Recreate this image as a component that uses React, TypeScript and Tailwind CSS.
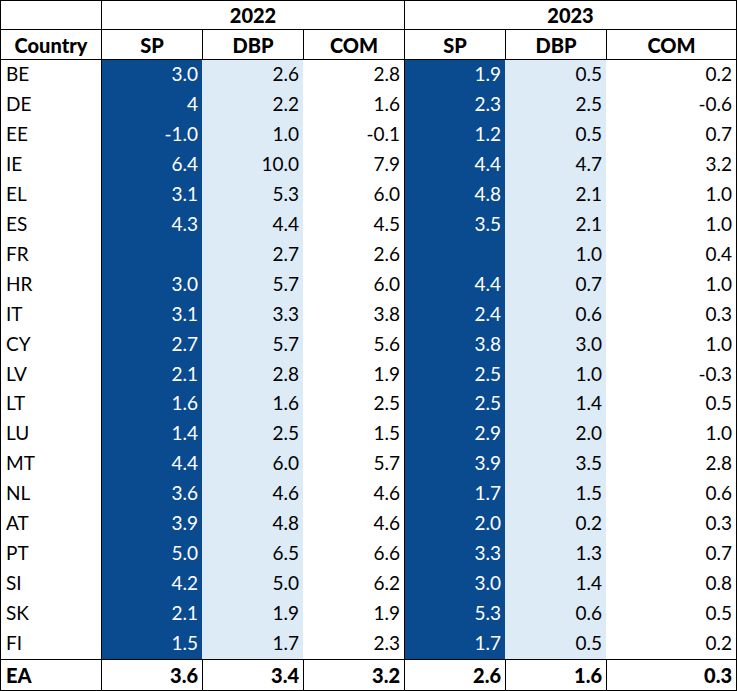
const rows: [string, string, string, string, string, string, string][] = [
	["BE", "3.0", "2.6", "2.8", "1.9", "0.5", "0.2"],
	["DE", "4", "2.2", "1.6", "2.3", "2.5", "-0.6"],
	["EE", "-1.0", "1.0", "-0.1", "1.2", "0.5", "0.7"],
	["IE", "6.4", "10.0", "7.9", "4.4", "4.7", "3.2"],
	["EL", "3.1", "5.3", "6.0", "4.8", "2.1", "1.0"],
	["ES", "4.3", "4.4", "4.5", "3.5", "2.1", "1.0"],
	["FR", "", "2.7", "2.6", "", "1.0", "0.4"],
	["HR", "3.0", "5.7", "6.0", "4.4", "0.7", "1.0"],
	["IT", "3.1", "3.3", "3.8", "2.4", "0.6", "0.3"],
	["CY", "2.7", "5.7", "5.6", "3.8", "3.0", "1.0"],
	["LV", "2.1", "2.8", "1.9", "2.5", "1.0", "-0.3"],
	["LT", "1.6", "1.6", "2.5", "2.5", "1.4", "0.5"],
	["LU", "1.4", "2.5", "1.5", "2.9", "2.0", "1.0"],
	["MT", "4.4", "6.0", "5.7", "3.9", "3.5", "2.8"],
	["NL", "3.6", "4.6", "4.6", "1.7", "1.5", "0.6"],
	["AT", "3.9", "4.8", "4.6", "2.0", "0.2", "0.3"],
	["PT", "5.0", "6.5", "6.6", "3.3", "1.3", "0.7"],
	["SI", "4.2", "5.0", "6.2", "3.0", "1.4", "0.8"],
	["SK", "2.1", "1.9", "1.9", "5.3", "0.6", "0.5"],
	["FI", "1.5", "1.7", "2.3", "1.7", "0.5", "0.2"]
];

const total = ["EA", "3.6", "3.4", "3.2", "2.6", "1.6", "0.3"];

// per data column: cell classes (fill + left edge)
const dataCols = [
	"w-[101px] border-l border-black bg-[#0a4a8f] text-white",
	"w-[101px] border-l border-[#ddebf7] bg-[#ddebf7] text-black",
	"w-[101px] border-l border-white bg-white text-black",
	"w-[101px] border-l border-black bg-[#0a4a8f] text-white",
	"w-[101px] border-l border-[#ddebf7] bg-[#ddebf7] text-black",
	"w-[130px] border-l border-white bg-white text-black"
];

const headCols = ["w-[101px]", "w-[101px]", "w-[101px]", "w-[101px]", "w-[101px]", "w-[130px]"];

export default function App() {
	return (
		<div
			className="bg-white text-black text-[19px] leading-none"
			style={{ fontFamily: "Lato, 'Liberation Sans', sans-serif" }}>
			<div className="w-[737px] border border-black">
				{/* Year row */}
				<div className="flex h-[29px] border-b border-black text-[20px] font-black">
					<div className="w-[100px]" />
					<div className="flex w-[303px] items-center justify-center border-l border-black">2022</div>
					<div className="flex w-[332px] items-center justify-center border-l border-black">2023</div>
				</div>

				{/* Column names */}
				<div className="flex h-[30px] border-b border-black text-[20px] font-black">
					<div className="flex w-[100px] items-center justify-center">Country</div>
					{["SP", "DBP", "COM", "SP", "DBP", "COM"].map((h, i) => (
						<div
							key={i}
							className={`flex items-center justify-center border-l border-black ${headCols[i]}`}>
							{h}
						</div>
					))}
				</div>

				{/* Countries */}
				<div className="flex h-[599px] flex-col">
					{rows.map(r => (
						<div key={r[0]} className="flex flex-1">
							<div className="flex w-[100px] items-center pl-[5px] pb-[3px]">{r[0]}</div>
							{r.slice(1).map((v, i) => (
								<div
									key={i}
									className={`flex items-center justify-end pr-[4px] pb-[3px] ${dataCols[i]}`}>
									{v}
								</div>
							))}
						</div>
					))}
				</div>

				{/* Euro area */}
				<div className="flex h-[31px] border-t border-black text-[20px] font-black">
					<div className="flex w-[100px] items-center pl-[5px]">{total[0]}</div>
					{total.slice(1).map((v, i) => (
						<div
							key={i}
							className={`flex items-center justify-end border-l border-black pr-[4px] ${headCols[i]}`}>
							{v}
						</div>
					))}
				</div>
			</div>
		</div>
	);
}
